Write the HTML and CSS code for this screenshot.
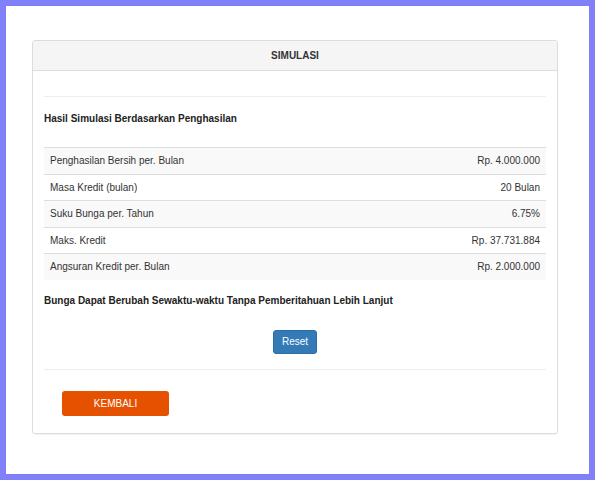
FILE: index.html
```html
<!DOCTYPE html>
<html>
<head>
<meta charset="utf-8">
<link rel="stylesheet" href="styles.css">
</head>
<body>
<div class="frame">
  <div class="panel">
    <div class="panel-heading">SIMULASI</div>
    <div class="panel-body">
      <hr class="rule-top">
      <div class="section-title">Hasil Simulasi Berdasarkan Penghasilan</div>
      <table class="result">
        <tr><td>Penghasilan Bersih per. Bulan</td><td class="num">Rp. 4.000.000</td></tr>
        <tr><td>Masa Kredit (bulan)</td><td class="num">20 Bulan</td></tr>
        <tr><td>Suku Bunga per. Tahun</td><td class="num">6.75%</td></tr>
        <tr><td>Maks. Kredit</td><td class="num">Rp. 37.731.884</td></tr>
        <tr><td>Angsuran Kredit per. Bulan</td><td class="num">Rp. 2.000.000</td></tr>
      </table>
      <div class="note">Bunga Dapat Berubah Sewaktu-waktu Tanpa Pemberitahuan Lebih Lanjut</div>
      <div class="center-row"><button class="btn-reset">Reset</button></div>
      <hr class="rule-bottom">
      <div class="back-row"><button class="btn-back">KEMBALI</button></div>
    </div>
  </div>
</div>
</body>
</html>
```
FILE: styles.css
```css
html, body {
  margin: 0;
  padding: 0;
}
body {
  background: #8080f8;
  font-family: "Liberation Sans", Arial, sans-serif;
  font-size: 10px;
  line-height: 14px;
  color: #333;
}
.frame {
  margin: 6px;
  height: 468px;
  background: #fff;
  box-sizing: border-box;
  padding: 34px 31px 0 32px;
}
.panel {
  border: 1px solid #ddd;
  border-radius: 3px;
  box-shadow: 0 1px 1px rgba(0,0,0,0.05);
  height: 394px;
  box-sizing: border-box;
  margin-left: -6px;
}
.panel-heading {
  height: 29px;
  background: #f5f5f5;
  border-bottom: 1px solid #ddd;
  border-radius: 3px 3px 0 0;
  display: flex;
  align-items: center;
  justify-content: center;
  font-weight: bold;
  color: #333;
}
.panel-body {
  padding: 0 11px;
}
hr {
  border: 0;
  border-top: 1px solid #eee;
  margin: 0;
}
.rule-top {
  margin-top: 25px;
}
.section-title {
  margin-top: 15px;
  font-weight: bold;
  color: #222;
}
.result {
  margin-top: 21px;
  width: 100%;
  border-collapse: collapse;
}
.result td {
  border-top: 1px solid #ddd;
  padding: 6px 6px 5.5px;
  line-height: 14px;
  color: #333;
}
.result tr:nth-child(odd) td {
  background: #f9f9f9;
}
.result .num {
  text-align: right;
}
.note {
  margin-top: 14px;
  font-weight: bold;
  color: #222;
}
.center-row {
  display: flex;
  justify-content: center;
  margin-top: 22px;
}
.btn-reset {
  width: 44px;
  height: 24px;
  padding: 0;
  background: #337ab7;
  border: 1px solid #2e6da4;
  border-radius: 3px;
  color: #fff;
  font-family: "Liberation Sans", Arial, sans-serif;
  font-size: 10px;
}
.rule-bottom {
  margin-top: 15px;
}
.back-row {
  margin-top: 21px;
  padding-left: 18px;
}
.btn-back {
  width: 107px;
  height: 25px;
  padding: 0;
  background: #e65100;
  border: 0;
  border-radius: 3px;
  color: #fff;
  font-family: "Liberation Sans", Arial, sans-serif;
  font-size: 10px;
}
```
